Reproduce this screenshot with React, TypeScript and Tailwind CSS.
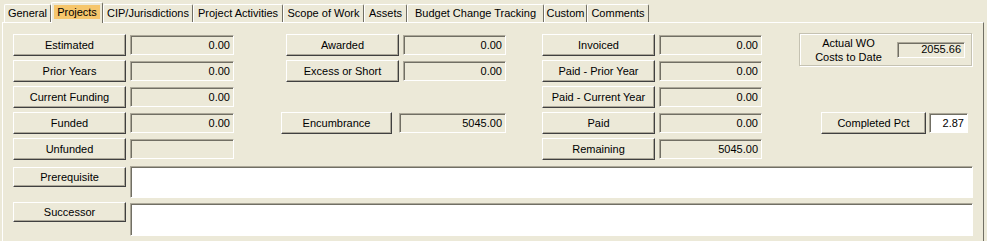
import React from "react";

const btn =
  "flex items-center justify-center border border-white border-r-[#404040] border-b-[#404040] bg-[#ece9d8] shadow-[inset_-1px_-1px_0_#aca899] text-black whitespace-nowrap";
const field =
  "flex items-center justify-end border border-[#aca899] border-r-white border-b-white pr-[3px] shadow-[inset_1px_1px_0_#716f64] whitespace-nowrap";

type RowProps = {
  label: string;
  value?: string;
  btnW: string;
  fieldW: string;
  gap?: string;
};

function Row({ label, value = "", btnW, fieldW, gap = "ml-[4px]" }: RowProps) {
  return (
    <div className="flex h-[22px] items-center justify-end">
      <div className={`${btn} h-[22px] ${btnW}`}>{label}</div>
      <div className={`${field} h-[20px] bg-[#ece9d8] ${gap} ${fieldW}`}>{value}</div>
    </div>
  );
}

const tabs = [
  { name: "General", w: "w-[47px]" },
  { name: "Projects", w: "w-[52px]", active: true },
  { name: "CIP/Jurisdictions", w: "w-[90px]" },
  { name: "Project Activities", w: "w-[90px]" },
  { name: "Scope of Work", w: "w-[81px]" },
  { name: "Assets", w: "w-[43px]" },
  { name: "Budget Change Tracking", w: "w-[137px]" },
  { name: "Custom", w: "w-[43px]" },
  { name: "Comments", w: "w-[62px]" },
];

export default function App() {
  return (
    <div
      className="h-[241px] w-[987px] overflow-hidden bg-[#ece9d8] text-[11px] text-black"
      style={{ fontFamily: '"Liberation Sans", Arial, sans-serif' }}
    >
      {/* tab strip */}
      <div className="relative z-10 flex h-[22px] items-end pl-[4px]">
        {tabs.map((t) =>
          t.active ? (
            <div
              key={t.name}
              className={`${t.w} -mb-[1px] flex h-[21px] items-start justify-center rounded-t-[2px] border border-b-0 border-white border-r-[#716f64] bg-[#ece9d8] pt-[2px]`}
            >
              <span className="bg-[#f6c66c] px-[3px] leading-[14px]">{t.name}</span>
            </div>
          ) : (
            <div
              key={t.name}
              className={`${t.w} flex h-[18px] items-center justify-center whitespace-nowrap rounded-t-[2px] border border-b-0 border-white border-r-[#716f64] bg-[#ece9d8] pb-[1px]`}
            >
              {t.name}
            </div>
          )
        )}
      </div>

      {/* panel */}
      <div className="ml-[2px] h-[219px] w-[982px] border-l border-t border-r border-white border-r-[#716f64] pl-[10px] pt-[11px]">
        <div className="flex h-[126px]">
          {/* column 1 */}
          <div className="flex w-[221px] flex-col gap-[4px]">
            <Row label="Estimated" value="0.00" btnW="w-[113px]" fieldW="w-[104px]" />
            <Row label="Prior Years" value="0.00" btnW="w-[113px]" fieldW="w-[104px]" />
            <Row label="Current Funding" value="0.00" btnW="w-[113px]" fieldW="w-[104px]" />
            <Row label="Funded" value="0.00" btnW="w-[113px]" fieldW="w-[104px]" />
            <Row label="Unfunded" btnW="w-[113px]" fieldW="w-[104px]" />
          </div>

          {/* column 2 */}
          <div className="ml-[47px] flex w-[225px] flex-col gap-[4px]">
            <Row label="Awarded" value="0.00" btnW="w-[113px]" fieldW="w-[103px]" />
            <Row label="Excess or Short" value="0.00" btnW="w-[113px]" fieldW="w-[103px]" />
            <div className="h-[22px]" />
            <Row
              label="Encumbrance"
              value="5045.00"
              btnW="w-[111px]"
              fieldW="w-[107px]"
              gap="ml-[7px]"
            />
          </div>

          {/* column 3 */}
          <div className="ml-[36px] flex w-[220px] flex-col gap-[4px]">
            <Row label="Invoiced" value="0.00" btnW="w-[113px]" fieldW="w-[103px]" />
            <Row label="Paid - Prior Year" value="0.00" btnW="w-[113px]" fieldW="w-[103px]" />
            <Row label="Paid - Current Year" value="0.00" btnW="w-[113px]" fieldW="w-[103px]" />
            <Row label="Paid" value="0.00" btnW="w-[113px]" fieldW="w-[103px]" />
            <Row label="Remaining" value="5045.00" btnW="w-[113px]" fieldW="w-[103px]" />
          </div>

          {/* column 4 */}
          <div className="ml-[37px] flex w-[173px] flex-col">
            <div className="-mt-[1px] flex h-[33px] items-center border border-[#c5c2b2] shadow-[inset_1px_1px_0_#ffffff,1px_1px_0_#ffffff]">
              <div className="flex w-[97px] flex-col items-center leading-[14px]">
                <span>Actual WO</span>
                <span>Costs to Date</span>
              </div>
              <div className={`${field} h-[16px] w-[68px] bg-[#ece9d8]`}>2055.66</div>
            </div>
            <div className="mt-[46px] flex h-[22px] items-center justify-end pr-[4px]">
              <div className={`${btn} h-[22px] w-[105px]`}>Completed Pct</div>
              <div className={`${field} ml-[3px] h-[20px] w-[39px] bg-white`}>2.87</div>
            </div>
          </div>
        </div>

        {/* prerequisite / successor */}
        <div className="mt-[6px] flex items-start">
          <div className={`${btn} mt-[1px] h-[20px] w-[113px]`}>Prerequisite</div>
          <div className={`${field} ml-[4px] h-[32px] w-[843px] bg-white`} />
        </div>
        <div className="mt-[4px] flex items-start">
          <div className={`${btn} h-[20px] w-[113px]`}>Successor</div>
          <div className={`${field} ml-[4px] mt-[1px] h-[33px] w-[843px] bg-white`} />
        </div>
      </div>
    </div>
  );
}
